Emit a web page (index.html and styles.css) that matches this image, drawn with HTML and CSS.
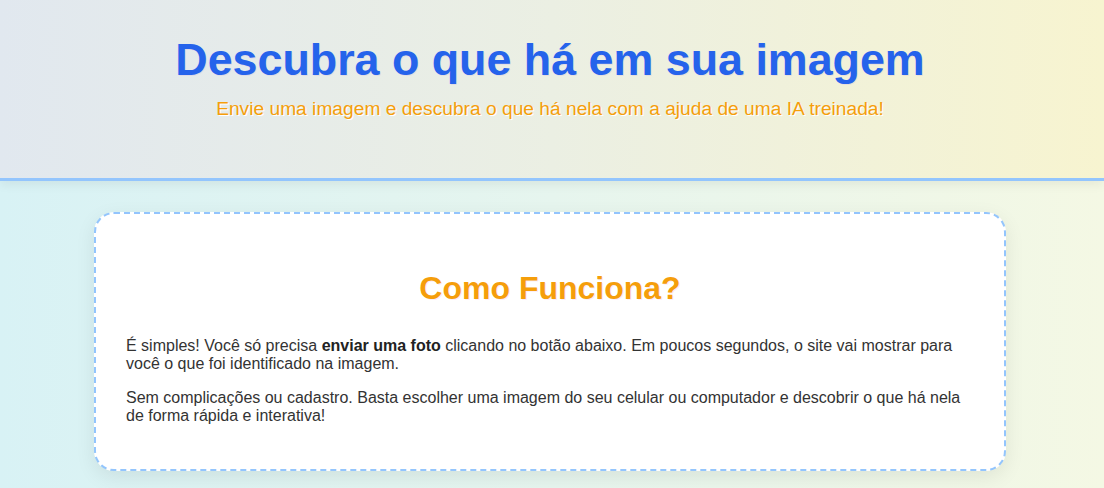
FILE: index.html
```html
<!DOCTYPE html>
<html lang="pt-BR">
<head>
<meta charset="utf-8">
<title>Descubra o que há em sua imagem</title>
<link rel="stylesheet" href="styles.css">
</head>
<body>
<header class="site-header">
  <h1 class="site-title">Descubra o que há em sua imagem</h1>
  <p class="site-subtitle">Envie uma imagem e descubra o que há nela com a ajuda de uma IA treinada!</p>
</header>
<main class="main">
  <section class="card">
    <h2 class="card-title">Como Funciona?</h2>
    <p class="card-text">É simples! Você só precisa <strong>enviar uma foto</strong> clicando no botão abaixo. Em poucos segundos, o site vai mostrar para você o que foi identificado na imagem.</p>
    <p class="card-text">Sem complicações ou cadastro. Basta escolher uma imagem do seu celular ou computador e descobrir o que há nela de forma rápida e interativa!</p>
  </section>
</main>
</body>
</html>
```
FILE: styles.css
```css
* { box-sizing: border-box; }
html, body { margin: 0; padding: 0; }
body {
  font-family: "Liberation Sans", Arial, sans-serif;
  color: #333;
  min-height: 100vh;
  background: linear-gradient(90deg, #d8f2f5 0%, #e6f5ee 50%, #f4f8e4 100%);
}
.site-header {
  background: linear-gradient(90deg, #e1e8ef 0%, #ebefe3 50%, #f7f4d0 100%);
  border-bottom: 3px solid #93c5fd;
  box-shadow: 0 4px 10px rgba(0, 0, 0, 0.06);
  text-align: center;
  padding: 34px 24px 0 20px;
  height: 181px;
}
.site-title {
  margin: 0;
  font-size: 44.8px;
  font-weight: 700;
  color: #2563eb;
  text-shadow: 1px 1px 0 rgba(180, 100, 220, 0.12);
}
.site-subtitle {
  margin: 13px 0 0;
  font-size: 19.2px;
  color: #f59e0b;
  text-shadow: 1px 1px 0 #fff;
}
.main {
  display: flex;
  justify-content: center;
  padding: 31px 4px 20px 0;
}
.card {
  width: 912px;
  background: #fff;
  border: 2px dashed #93c5fd;
  border-radius: 20px;
  padding: 30px 30px 28px;
  box-shadow: 0 6px 20px rgba(0, 0, 0, 0.08);
}
.card-title {
  margin: 26px 0 30px;
  text-align: center;
  font-size: 32px;
  font-weight: 700;
  color: #f59e0b;
  text-shadow: 1px 1px 0 rgba(220, 120, 200, 0.15);
}
.card-text {
  margin: 16px 0;
  font-size: 16px;
  line-height: 18px;
}
.card-text strong { color: #222; }
```
